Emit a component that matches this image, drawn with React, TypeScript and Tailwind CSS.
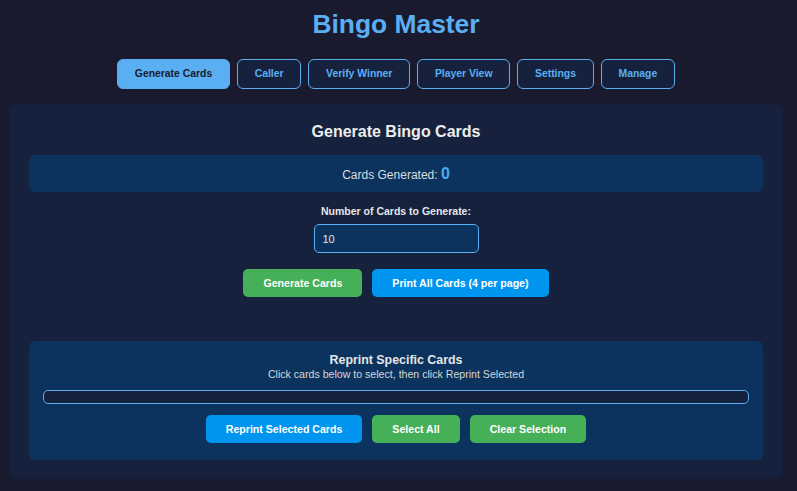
import { useState } from "react";

const tabs = ["Generate Cards", "Caller", "Verify Winner", "Player View", "Settings", "Manage"];

function cx(...arr: Array<string | false | null | undefined>) {
  return arr.filter(Boolean).join(" ");
}

export default function App() {
  const [active, setActive] = useState("Generate Cards");
  const [count, setCount] = useState("10");

  return (
    <div className="min-h-screen bg-[#1a1a2e] pl-[9px] pr-[14px] pt-[9px] pb-[12px] font-['Liberation_Sans',Arial,sans-serif]">
      <h1 className="text-center text-[26.4px] font-bold leading-[30px] text-[#5aaff2]">Bingo Master</h1>

      {/* Tabs */}
      <nav className="mt-[20px] flex justify-center gap-[7px]">
        {tabs.map((t) => (
          <button
            key={t}
            type="button"
            onClick={() => setActive(t)}
            className={cx(
              "rounded-[6px] border px-[16.75px] py-2 text-[10.4px] font-bold leading-[12px]",
              t === active
                ? "border-[#5aaff2] bg-[#5aaff2] text-[#1a1a2e]"
                : "border-[#5aaff2] bg-[#16213e] text-[#5aaff2]"
            )}
          >
            {t}
          </button>
        ))}
      </nav>

      {/* Panel */}
      <main className="mt-[15px] rounded-[8px] bg-[#16213e] px-[20px] pt-[19px] pb-[19px]">
        <h2 className="text-center text-[16px] font-bold leading-[18px] text-[#ececec]">Generate Bingo Cards</h2>

        <div className="mt-[14px] flex h-[37px] items-center justify-center rounded-[6px] bg-[#0b335e] text-[12px] text-[#dcdcdc]">
          <span>
            Cards Generated: <span className="text-[16px] font-bold text-[#4eaaf0]">0</span>
          </span>
        </div>

        <label className="mt-[13px] block text-center text-[10.5px] font-bold leading-[12px] text-[#e6e6e6]">
          Number of Cards to Generate:
        </label>
        <div className="mt-[7px] flex justify-center">
          <input
            value={count}
            onChange={(e) => setCount(e.target.value)}
            className="h-[29px] w-[165px] rounded-[5px] border border-[#5aaff2] bg-[#0b335e] pl-[8px] text-[11px] text-[#e6e6e6] outline-none"
          />
        </div>

        <div className="mt-[16px] flex justify-center gap-[10px]">
          <button type="button" className="rounded-[5px] bg-[#46b058] px-5 py-2 text-[10.6px] font-bold leading-[12px] text-white">
            Generate Cards
          </button>
          <button type="button" className="rounded-[5px] bg-[#0096ef] px-5 py-2 text-[10.6px] font-bold leading-[12px] text-white">
            Print All Cards (4 per page)
          </button>
        </div>

        {/* Reprint */}
        <section className="mt-[44px] rounded-[6px] bg-[#0b335e] px-[14px] pt-[12px] pb-[17px]">
          <h3 className="text-center text-[12.4px] font-bold leading-[15px] text-[#e6e6e6]">Reprint Specific Cards</h3>
          <p className="text-center text-[10.6px] leading-[12px] text-[#d6d6d6]">
            Click cards below to select, then click Reprint Selected
          </p>
          <div className="mt-[10px] h-[14px] rounded-[5px] border border-[#5aaff2] bg-[#16213e]" />
          <div className="mt-[11px] flex justify-center gap-[10px]">
            <button type="button" className="rounded-[5px] bg-[#0096ef] px-5 py-2 text-[10.6px] font-bold leading-[12px] text-white">
              Reprint Selected Cards
            </button>
            <button type="button" className="rounded-[5px] bg-[#46b058] px-5 py-2 text-[10.6px] font-bold leading-[12px] text-white">
              Select All
            </button>
            <button type="button" className="rounded-[5px] bg-[#46b058] px-5 py-2 text-[10.6px] font-bold leading-[12px] text-white">
              Clear Selection
            </button>
          </div>
        </section>
      </main>
    </div>
  );
}
